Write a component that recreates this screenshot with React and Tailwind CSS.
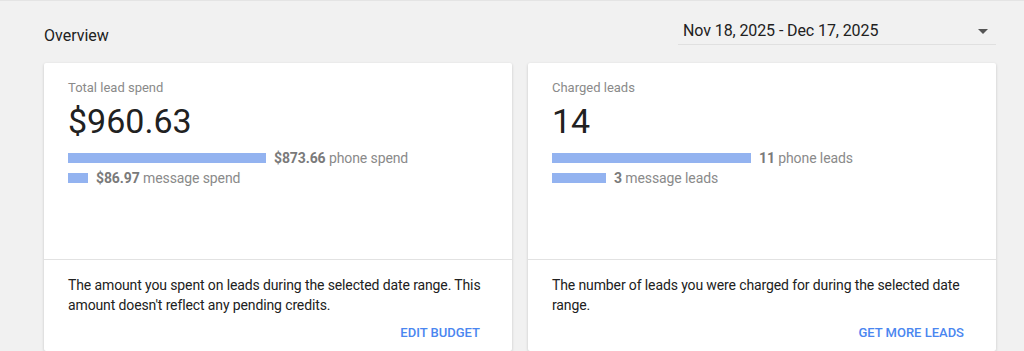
import React from 'react';

const CARDS = [
  {
    label: 'Total lead spend',
    total: '$960.63',
    rows: [
      { value: '$873.66', text: 'phone spend', width: 198 },
      { value: '$86.97', text: 'message spend', width: 20 },
    ],
    description: "The amount you spent on leads during the selected date range. This amount doesn't reflect any pending credits.",
    action: 'Edit budget',
  },
  {
    label: 'Charged leads',
    total: '14',
    rows: [
      { value: '11', text: 'phone leads', width: 199 },
      { value: '3', text: 'message leads', width: 54 },
    ],
    description: 'The number of leads you were charged for during the selected date range.',
    action: 'Get more leads',
  },
];

function StatCard({ card }) {
  return (
    <div className="bg-white rounded-[2px] shadow-[0_1px_3px_rgba(0,0,0,0.18)]">
      <div className="h-[197px] px-6 pt-[15px] border-b border-[#e2e2e2]">
        <div className="text-[13px] leading-5 text-[#8a8a8a]">{card.label}</div>
        <div className="mt-[3px] text-[34px] leading-10 text-[#212121]">{card.total}</div>
        <div className="mt-[7px]">
          {card.rows.map(r => (
            <div key={r.text} className="flex items-center h-5 gap-2 text-sm tracking-[-0.1px]">
              <div className="h-[10px] bg-[#93b3f0]" style={{ width: r.width }} />
              <span className="text-[#8a8a8a]">
                <span className="font-bold text-[#7a7a7a]">{r.value}</span> {r.text}
              </span>
            </div>
          ))}
        </div>
      </div>
      <div className="px-6 pt-[15px]">
        <p className="text-sm leading-5 tracking-[-0.12px] text-[#212121]">{card.description}</p>
        <div className="flex justify-end">
          <button className="h-9 px-2 text-[13px] font-medium uppercase text-[#4a86f0]">{card.action}</button>
        </div>
      </div>
    </div>
  );
}

export default function App() {
  return (
    <div style={{ fontFamily: "Roboto, 'Liberation Sans', sans-serif" }} className="min-h-screen bg-[#f1f1f1] border-t border-[#e4e4e4] overflow-hidden">
      <div className="w-[952px] ml-[44px] pt-[20px]">
        <div className="flex justify-between items-start">
          <h2 className="mt-[5px] text-base leading-5 text-[#212121]">Overview</h2>
          <div className="w-[318px] flex items-center justify-between pl-[5px] pr-[8px] pb-[3px] border-b border-[#e0e0e0] text-base leading-5 tracking-[-0.1px] text-[#212121]">
            <span>Nov 18, 2025 - Dec 17, 2025</span>
            <svg width="10" height="5" viewBox="0 0 10 5"><path d="M0 0h10L5 5z" fill="#555" /></svg>
          </div>
        </div>
        <div className="mt-[17px] grid grid-cols-2 gap-4">
          {CARDS.map(c => <StatCard key={c.label} card={c} />)}
        </div>
      </div>
    </div>
  );
}
